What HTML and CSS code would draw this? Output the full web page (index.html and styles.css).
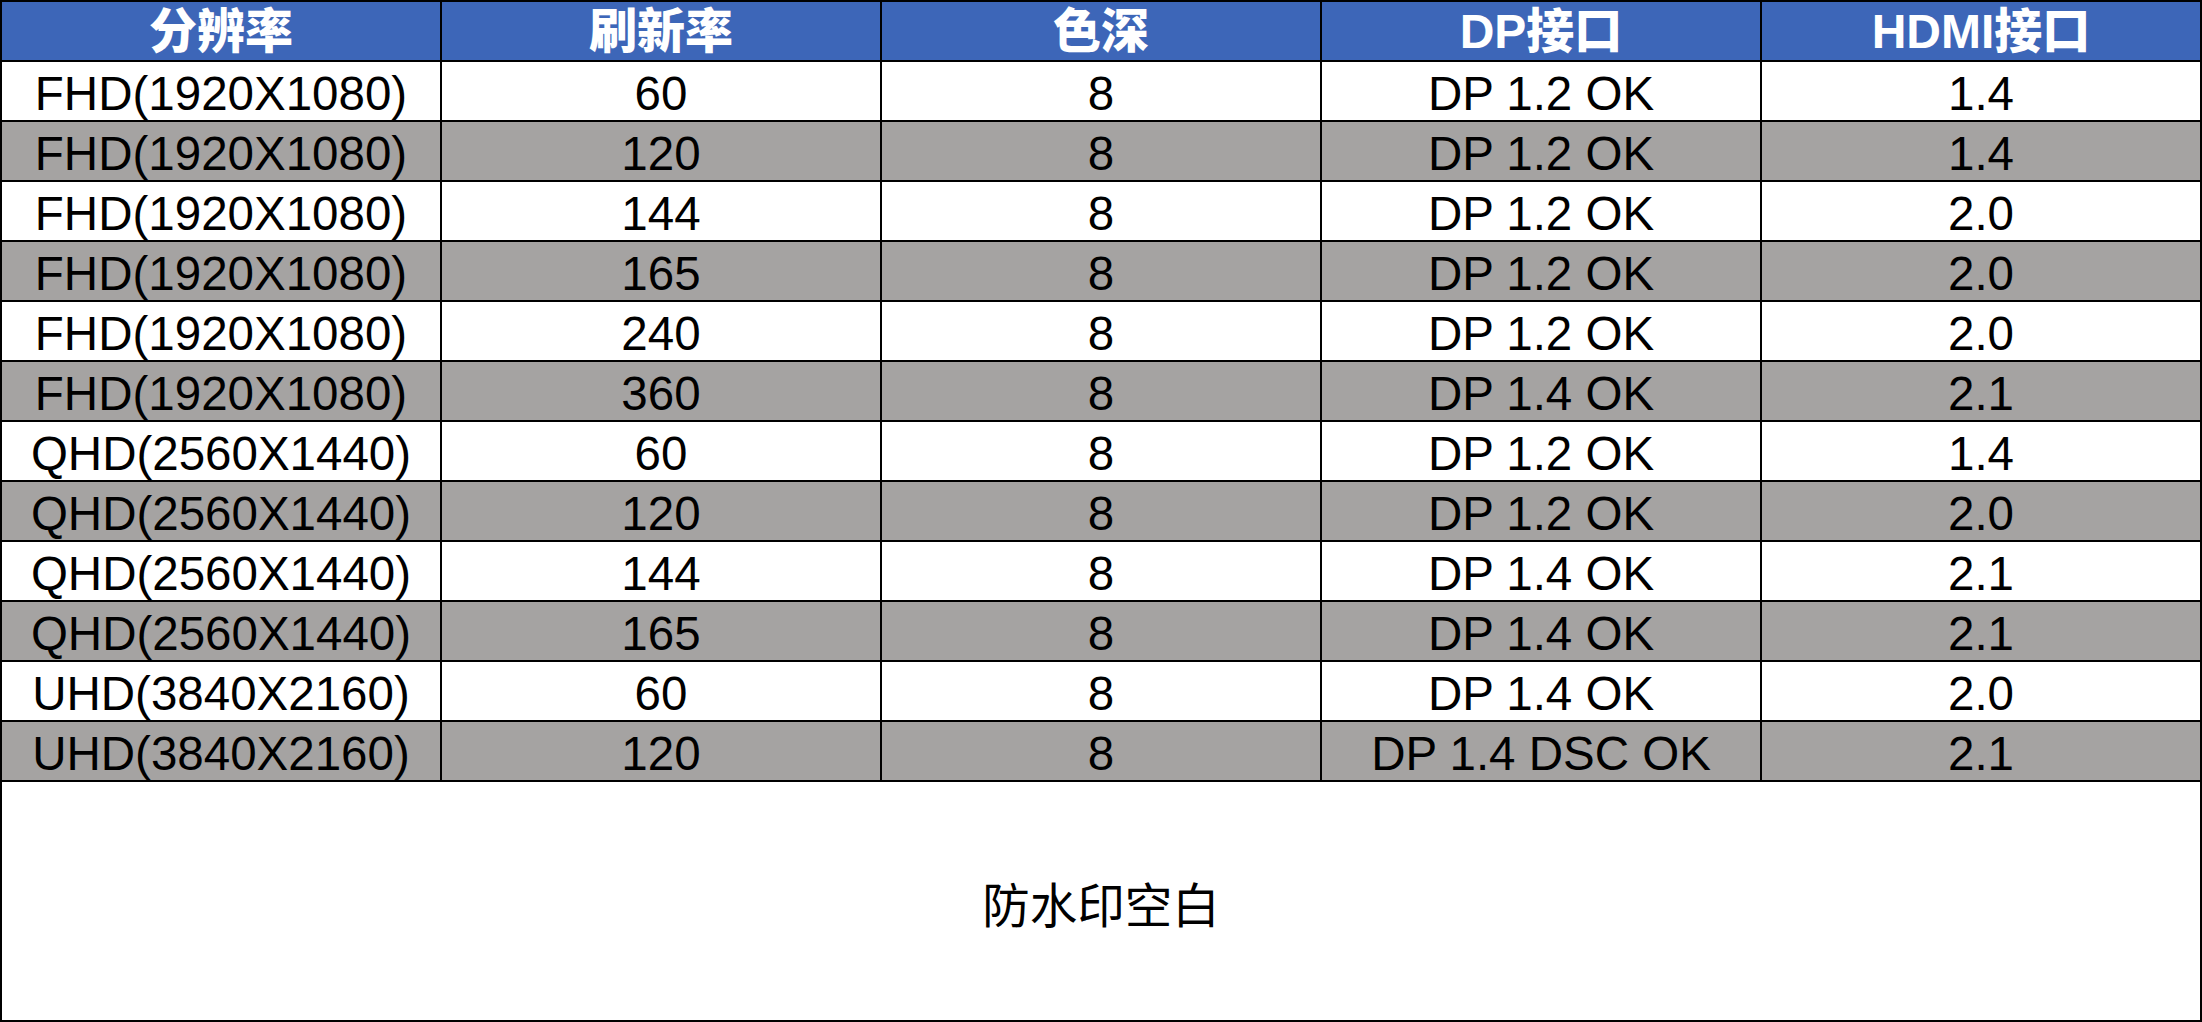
FILE: index.html
```html
<!DOCTYPE html>
<html lang="zh-CN">
<head>
<meta charset="utf-8">
<title>分辨率与接口对照表</title>
<link rel="stylesheet" href="styles.css">
</head>
<body>
<div class="sheet">
  <div class="cell head">分辨率</div>
  <div class="cell head">刷新率</div>
  <div class="cell head">色深</div>
  <div class="cell head">DP接口</div>
  <div class="cell head">HDMI接口</div>

  <div class="cell">FHD(1920X1080)</div><div class="cell">60</div><div class="cell">8</div><div class="cell">DP 1.2 OK</div><div class="cell">1.4</div>
  <div class="cell alt">FHD(1920X1080)</div><div class="cell alt">120</div><div class="cell alt">8</div><div class="cell alt">DP 1.2 OK</div><div class="cell alt">1.4</div>
  <div class="cell">FHD(1920X1080)</div><div class="cell">144</div><div class="cell">8</div><div class="cell">DP 1.2 OK</div><div class="cell">2.0</div>
  <div class="cell alt">FHD(1920X1080)</div><div class="cell alt">165</div><div class="cell alt">8</div><div class="cell alt">DP 1.2 OK</div><div class="cell alt">2.0</div>
  <div class="cell">FHD(1920X1080)</div><div class="cell">240</div><div class="cell">8</div><div class="cell">DP 1.2 OK</div><div class="cell">2.0</div>
  <div class="cell alt">FHD(1920X1080)</div><div class="cell alt">360</div><div class="cell alt">8</div><div class="cell alt">DP 1.4 OK</div><div class="cell alt">2.1</div>
  <div class="cell">QHD(2560X1440)</div><div class="cell">60</div><div class="cell">8</div><div class="cell">DP 1.2 OK</div><div class="cell">1.4</div>
  <div class="cell alt">QHD(2560X1440)</div><div class="cell alt">120</div><div class="cell alt">8</div><div class="cell alt">DP 1.2 OK</div><div class="cell alt">2.0</div>
  <div class="cell">QHD(2560X1440)</div><div class="cell">144</div><div class="cell">8</div><div class="cell">DP 1.4 OK</div><div class="cell">2.1</div>
  <div class="cell alt">QHD(2560X1440)</div><div class="cell alt">165</div><div class="cell alt">8</div><div class="cell alt">DP 1.4 OK</div><div class="cell alt">2.1</div>
  <div class="cell">UHD(3840X2160)</div><div class="cell">60</div><div class="cell">8</div><div class="cell">DP 1.4 OK</div><div class="cell">2.0</div>
  <div class="cell alt">UHD(3840X2160)</div><div class="cell alt">120</div><div class="cell alt">8</div><div class="cell alt">DP 1.4 DSC OK</div><div class="cell alt">2.1</div>

  <div class="note">防水印空白</div>
</div>
</body>
</html>
```
FILE: styles.css
```css
html, body {
  margin: 0;
  padding: 0;
  background: #ffffff;
}

.sheet {
  box-sizing: border-box;
  width: 2202px;
  height: 1022px;
  display: grid;
  grid-template-columns: repeat(5, 1fr);
  grid-template-rows: repeat(13, 58px) 1fr;
  gap: 2px;
  padding: 2px;
  background: #000000;
  font-family: "Liberation Sans", Arial, "Noto Sans CJK SC", sans-serif;
  color: #000000;
}

.cell {
  box-sizing: border-box;
  background: #ffffff;
  text-align: center;
  font-size: 47.5px;
  line-height: 53px;
  padding-top: 5px;
  white-space: nowrap;
  overflow: hidden;
}

.cell.alt {
  background: #a5a3a2;
}

.cell.head {
  background: #3d66b8;
  color: #ffffff;
  font-weight: 900;
  font-size: 48px;
  padding-top: 3px;
}

.note {
  grid-column: 1 / -1;
  background: #ffffff;
  display: flex;
  align-items: center;
  justify-content: center;
  font-family: "Noto Sans CJK SC", sans-serif;
  font-size: 47.5px;
  padding-top: 2px;
}
```
